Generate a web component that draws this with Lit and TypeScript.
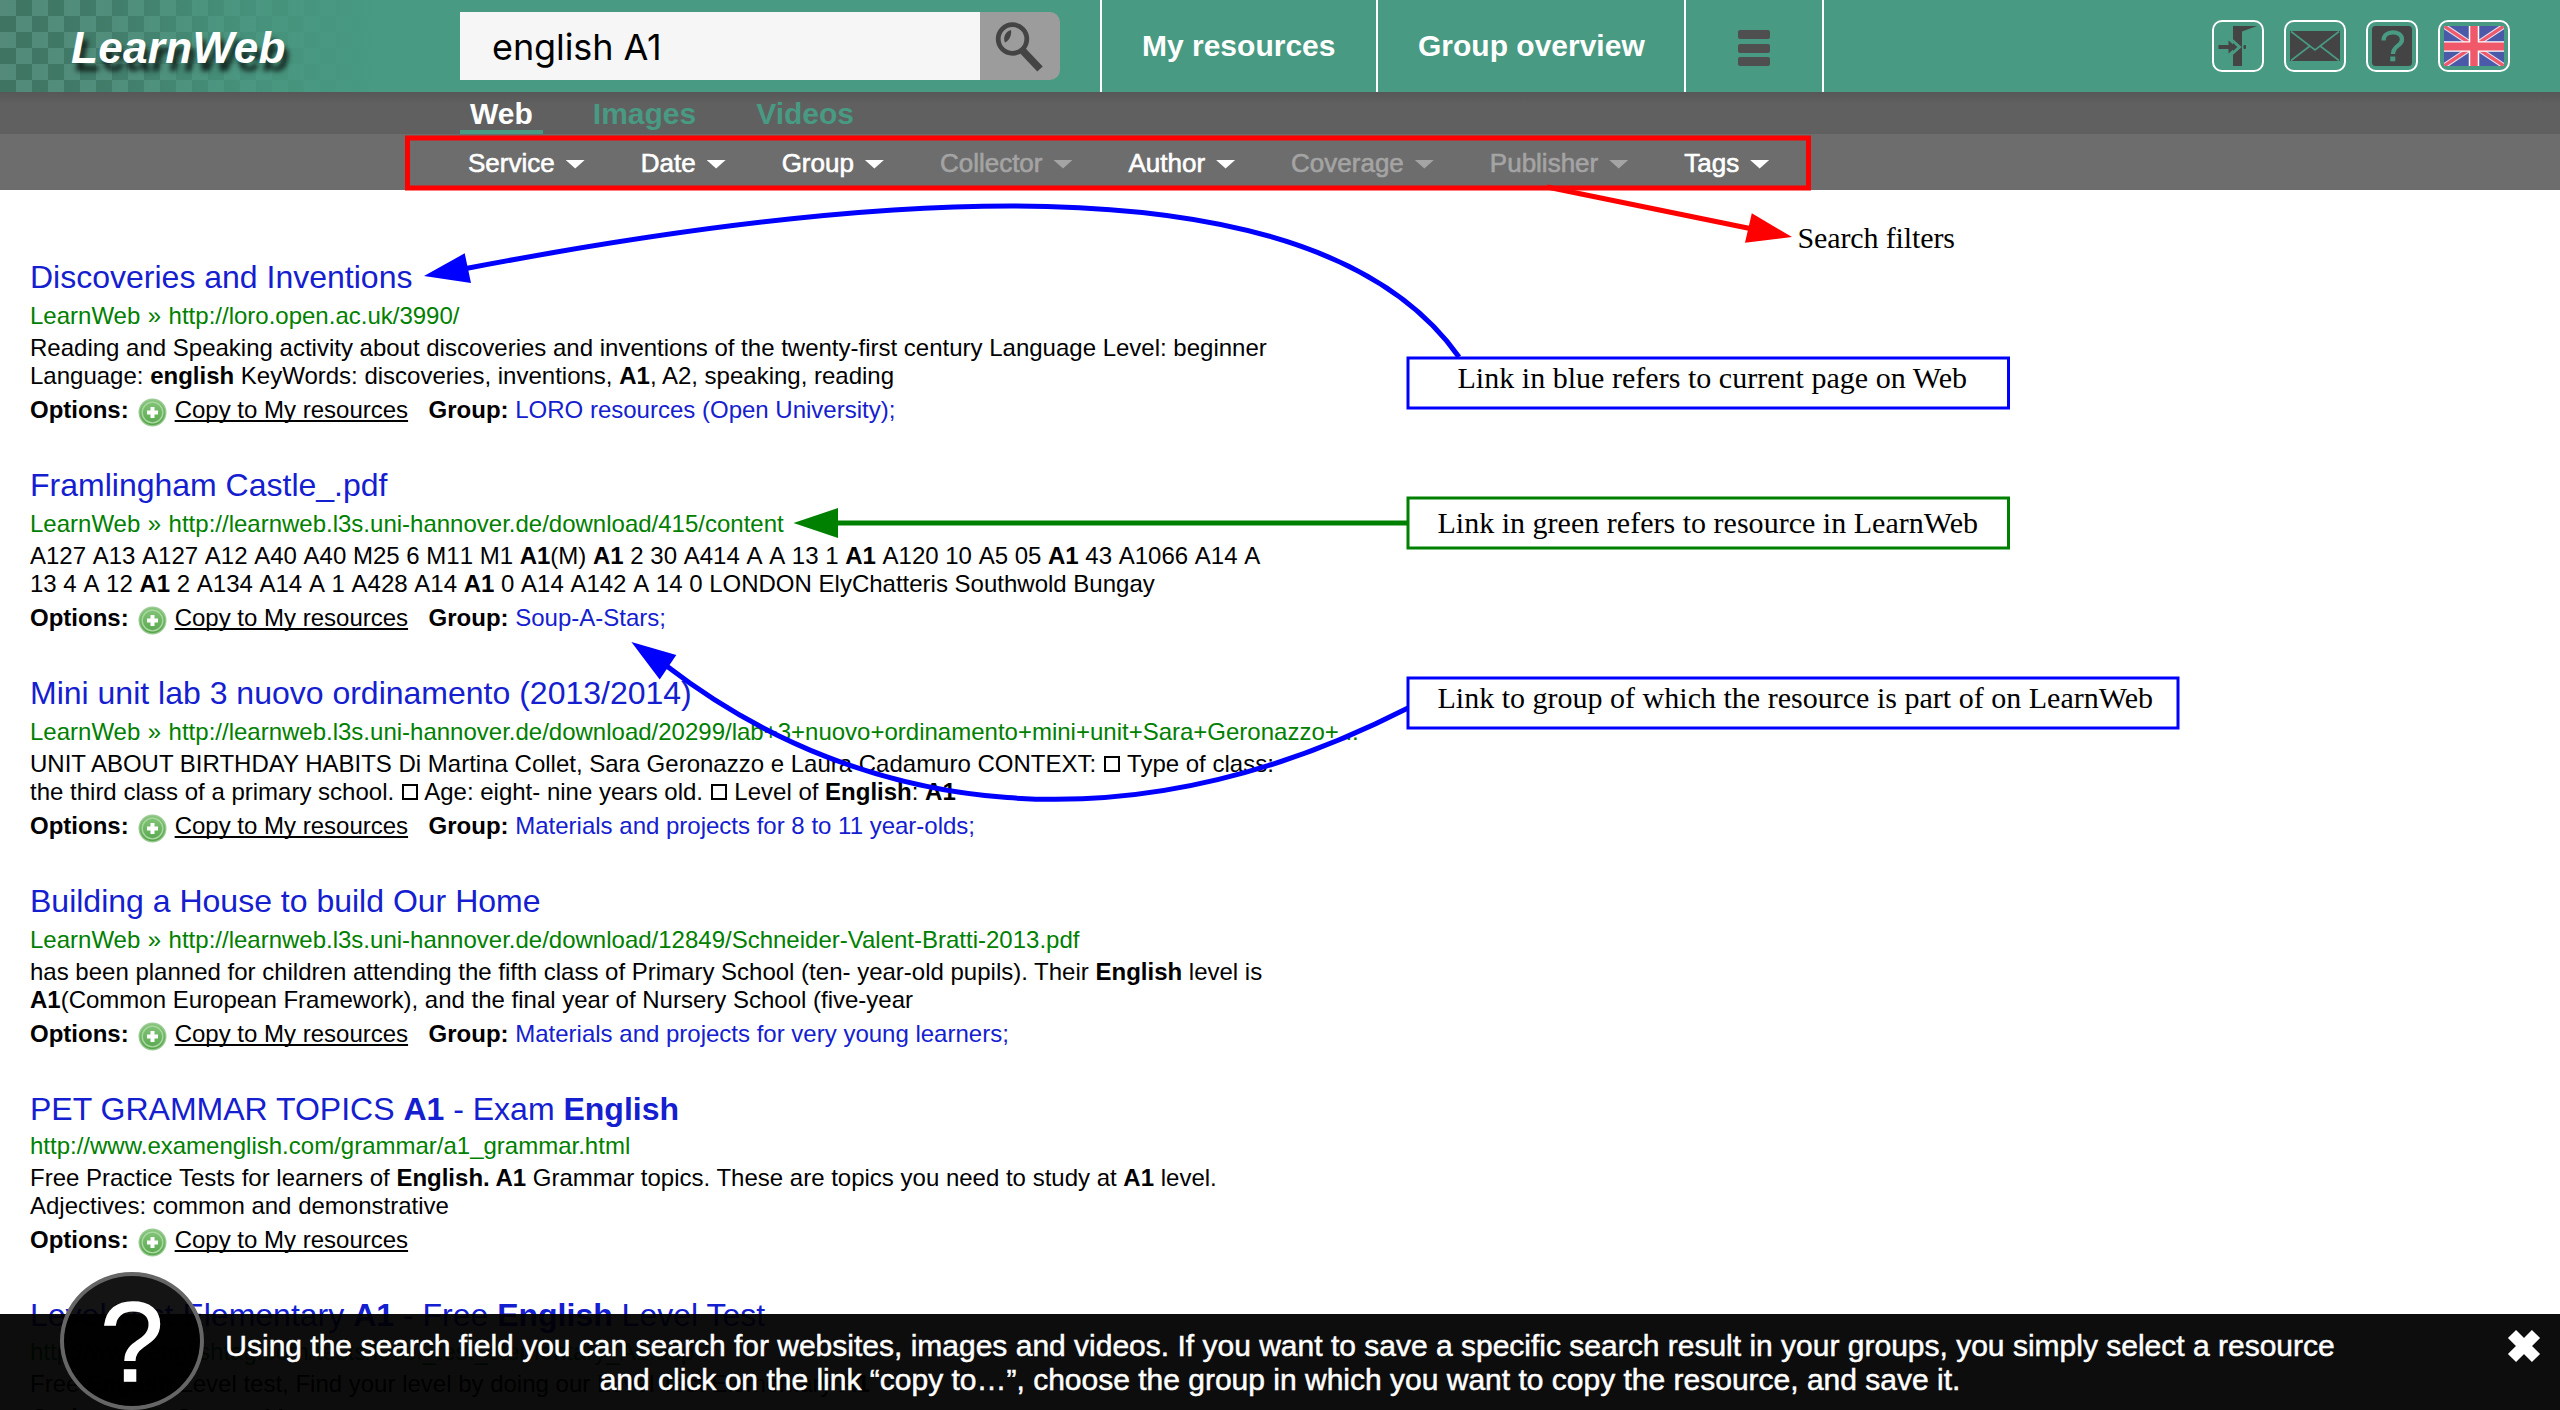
import { LitElement, html, css, svg, nothing, type TemplateResult } from "lit";
import { customElement, property } from "lit/decorators.js";
import { classMap } from "lit/directives/class-map.js";

interface Filter {
  label: string;
  enabled: boolean;
}

interface Result {
  title: TemplateResult;
  source?: string;
  url: string;
  snippet: TemplateResult[];
  codes?: boolean;
  group?: string;
}

const box = html`<span class="tofu"></span>`;

const FILTERS: Filter[] = [
  { label: "Service", enabled: true },
  { label: "Date", enabled: true },
  { label: "Group", enabled: true },
  { label: "Collector", enabled: false },
  { label: "Author", enabled: true },
  { label: "Coverage", enabled: false },
  { label: "Publisher", enabled: false },
  { label: "Tags", enabled: true },
];

const RESULTS: Result[] = [
  {
    title: html`Discoveries and Inventions`,
    source: "LearnWeb",
    url: "http://loro.open.ac.uk/3990/",
    snippet: [
      html`Reading and Speaking activity about discoveries and inventions of the twenty-first century Language Level: beginner`,
      html`Language: <b>english</b> KeyWords: discoveries, inventions, <b>A1</b>, A2, speaking, reading`,
    ],
    group: "LORO resources (Open University);",
  },
  {
    title: html`Framlingham Castle_.pdf`,
    source: "LearnWeb",
    url: "http://learnweb.l3s.uni-hannover.de/download/415/content",
    snippet: [
      html`A127 A13 A127 A12 A40 A40 M25 6 M11 M1 <b>A1</b>(M) <b>A1</b> 2 30 A414 A A 13 1 <b>A1</b> A120 10 A5 05 <b>A1</b> 43 A1066 A14 A`,
      html`13 4 A 12 <b>A1</b> 2 A134 A14 A 1 A428 A14 <b>A1</b> 0 A14 A142 A 14 0 LONDON ElyChatteris Southwold Bungay`,
    ],
    codes: true,
    group: "Soup-A-Stars;",
  },
  {
    title: html`Mini unit lab 3 nuovo ordinamento (2013/2014)`,
    source: "LearnWeb",
    url: "http://learnweb.l3s.uni-hannover.de/download/20299/lab+3+nuovo+ordinamento+mini+unit+Sara+Geronazzo+...",
    snippet: [
      html`UNIT ABOUT BIRTHDAY HABITS Di Martina Collet, Sara Geronazzo e Laura Cadamuro CONTEXT: ${box} Type of class:`,
      html`the third class of a primary school. ${box} Age: eight- nine years old. ${box} Level of <b>English</b>: <b>A1</b>`,
    ],
    group: "Materials and projects for 8 to 11 year-olds;",
  },
  {
    title: html`Building a House to build Our Home`,
    source: "LearnWeb",
    url: "http://learnweb.l3s.uni-hannover.de/download/12849/Schneider-Valent-Bratti-2013.pdf",
    snippet: [
      html`has been planned for children attending the fifth class of Primary School (ten- year-old pupils). Their <b>English</b> level is`,
      html`<b>A1</b>(Common European Framework), and the final year of Nursery School (five-year`,
    ],
    group: "Materials and projects for very young learners;",
  },
  {
    title: html`PET GRAMMAR TOPICS <b>A1</b> - Exam <b>English</b>`,
    url: "http://www.examenglish.com/grammar/a1_grammar.html",
    snippet: [
      html`Free Practice Tests for learners of <b>English. A1</b> Grammar topics. These are topics you need to study at <b>A1</b> level.`,
      html`Adjectives: common and demonstrative`,
    ],
  },
  {
    title: html`Level Test Elementary <b>A1</b> - Free <b>English</b> Level Test`,
    url: "http://www.englishtag.com/tests/level_test_elementary_A1.asp",
    snippet: [html`Free <b>English</b> Level test, Find your level by doing our Level Test Elementary <b>A1</b>`],
  },
];

@customElement("learnweb-header")
export class LearnwebHeader extends LitElement {
  static styles = css`
    :host {
      display: flex;
      height: 92px;
      box-sizing: border-box;
      background: #489a82;
      color: #fff;
      font-family: "Liberation Sans", Arial, sans-serif;
    }
    .brand {
      width: 460px;
      flex: none;
      box-sizing: border-box;
      padding-left: 71px;
      display: flex;
      align-items: center;
      background: linear-gradient(90deg, rgba(72, 154, 130, 0) 0, rgba(72, 154, 130, 0.25) 110px, rgba(72, 154, 130, 0.75) 240px, #489a82 380px),
        repeating-conic-gradient(#3f7362 0 25%, #538a79 0 50%) 0 0 / 32px 32px;
    }
    .logo {
      font: italic bold 44px/48px "Liberation Sans", Arial, sans-serif;
      letter-spacing: 0.35px;
      padding-top: 4px;
      text-shadow: 4px 8px 5px rgba(0, 0, 0, 0.75);
    }
    .search {
      display: flex;
      width: 600px;
      height: 68px;
      margin: 12px 40px 0 0;
      flex: none;
    }
    .field {
      width: 520px;
      box-sizing: border-box;
      background: #f6f6f6;
      color: #000;
      padding-left: 32px;
      font: 36px/70px Inter, sans-serif;
      letter-spacing: -0.1px;
      white-space: nowrap;
    }
    .go {
      width: 80px;
      background: #9c9c9c;
      border-radius: 0 10px 10px 0;
    }
    .nav {
      display: flex;
      font-size: 30px;
      font-weight: bold;
      line-height: 91px;
    }
    .cell {
      box-sizing: border-box;
      border-left: 2px solid #fff;
      padding-left: 40px;
      white-space: nowrap;
    }
    .cell-res {
      width: 276px;
    }
    .cell-group {
      width: 308px;
    }
    .cell-menu {
      width: 140px;
      padding: 0;
      border-right: 2px solid #fff;
      display: flex;
      flex-direction: column;
      align-items: center;
      padding-top: 30px;
      gap: 4.5px;
    }
    .bar {
      width: 32px;
      height: 9px;
      border-radius: 2px;
      background: #4f4f4f;
    }
    .tools {
      display: flex;
      gap: 20px;
      margin: 20px 50px 0 auto;
    }
    .tool {
      height: 48px;
      border: 2px solid #fff;
      border-radius: 10px;
    }
    svg {
      display: block;
    }
  `;

  render() {
    return html`
      <div class="brand"><span class="logo">LearnWeb</span></div>
      <div class="search">
        <div class="field">english A1</div>
        <div class="go">
          <svg width="80" height="68" viewBox="0 0 80 68">
            <circle cx="32.5" cy="27" r="14.3" fill="none" stroke="#444" stroke-width="4.8" />
            <path d="M42.5 38.5 L60 57" stroke="#444" stroke-width="7.5" fill="none" />
            <path d="M31 18 C25.500 19 22.500 26 25 30.500 C29 29 32 23 31 18 Z" fill="#444" />
          </svg>
        </div>
      </div>
      <div class="nav">
        <div class="cell cell-res">My resources</div>
        <div class="cell cell-group">Group overview</div>
        <div class="cell cell-menu"><div class="bar"></div><div class="bar"></div><div class="bar"></div></div>
      </div>
      <div class="tools">
        <div class="tool">
          <svg width="48" height="48" viewBox="0 0 48 48" fill="#444">
            <path d="M19 4 H43 L28 9.500 V44 H19 Z" />
            <path d="M15 15.500 L25.500 25 L15 34.500" fill="none" stroke="#489a82" stroke-width="3" />
            <path d="M4.500 23 H14.500 V18.500 L22 25 L14.500 31.500 V27 H4.500 Z" />
            <rect x="29.500" y="23" width="2.500" height="4" rx="1" />
          </svg>
        </div>
        <div class="tool">
          <svg width="58" height="48" viewBox="0 0 58 48">
            <rect x="4" y="9" width="50" height="30" fill="#444" />
            <path d="M5 9.500 L29 28 L53 9.500 M5 38.500 L24.500 23.500 M53 38.500 L33.500 23.500" fill="none" stroke="#489a82" stroke-width="1.600" />
          </svg>
        </div>
        <div class="tool">
          <svg width="48" height="48" viewBox="0 0 48 48">
            <rect x="4" y="4" width="40" height="40" rx="3.500" fill="#444" />
            <path d="M15.500 18.500 C15.500 7.500 34 8 34 17.500 C34 24 25 23.500 25 32" fill="none" stroke="#489a82" stroke-width="4.300" />
            <rect x="22.300" y="34.500" width="5" height="4.800" fill="#489a82" />
          </svg>
        </div>
        <div class="tool">
          <svg width="68" height="48" viewBox="0 0 68 48">
            <clipPath id="flag"><rect x="4" y="4" width="60" height="40" rx="1.500" /></clipPath>
            <g clip-path="url(#flag)">
              <rect x="4" y="4" width="60" height="40" fill="#4a5aa8" />
              <path d="M4 4 L64 44 M64 4 L4 44" stroke="#e3dcef" stroke-width="5.500" />
              <path d="M4 4 L64 44 M64 4 L4 44" stroke="#f0596a" stroke-width="3.200" />
              <path d="M34 4 V44 M4 24.500 H64" stroke="#fff" stroke-width="10.500" />
              <path d="M34 4 V44" stroke="#f0596a" stroke-width="7.500" />
              <path d="M4 24.500 H64" stroke="#f0596a" stroke-width="8" />
            </g>
          </svg>
        </div>
      </div>
    `;
  }
}

@customElement("search-filters")
export class SearchFilters extends LitElement {
  static styles = css`
    :host {
      display: block;
      font-family: "Liberation Sans", Arial, sans-serif;
    }
    .tabs {
      display: flex;
      gap: 40px;
      height: 42px;
      padding-left: 460px;
      background: linear-gradient(#575757, #606060 12px);
      font-size: 30px;
      font-weight: bold;
      line-height: 44px;
    }
    .tab {
      box-sizing: border-box;
      height: 42px;
      padding: 0 10px;
      color: #489a82;
    }
    .current {
      color: #fff;
      border-bottom: 4px solid #489a82;
    }
    .filters {
      display: flex;
      gap: 56px;
      height: 56px;
      padding-left: 468px;
      background: #6d6d6d;
      font-size: 26px;
      line-height: 58px;
    }
    .filter {
      display: flex;
      gap: 11px;
      color: #fff;
      -webkit-text-stroke: 0.6px currentColor;
    }
    .off {
      color: #a4a4a4;
    }
    .arrow {
      margin-top: 26px;
      width: 19px;
      height: 8.500px;
      background: currentColor;
      clip-path: polygon(0 0, 100% 0, 50% 100%);
    }
  `;

  render() {
    return html`
      <div class="tabs">
        <div class="tab current">Web</div>
        <div class="tab">Images</div>
        <div class="tab">Videos</div>
      </div>
      <div class="filters">
        ${FILTERS.map(
          (f) => html`<div class=${classMap({ filter: true, off: !f.enabled })}>${f.label}<span class="arrow"></span></div>`
        )}
      </div>
    `;
  }
}

@customElement("search-result")
export class SearchResult extends LitElement {
  @property({ attribute: false }) result!: Result;

  static styles = css`
    :host {
      display: block;
      font: 24px/28px "Liberation Sans", Arial, sans-serif;
      color: #000;
      white-space: nowrap;
    }
    .title {
      font-size: 32px;
      line-height: 36px;
      color: #1420d0;
    }
    .url {
      margin-top: 7px;
      color: #008000;
      word-spacing: 0.8px;
    }
    .external {
      margin-top: 5px;
    }
    .snippet {
      margin-top: 4px;
    }
    .codes {
      font-kerning: none;
    }
    .options {
      display: flex;
      margin-top: 6px;
      height: 28px;
    }
    .plus {
      margin: 2px 8px 0 9px;
      width: 29px;
      height: 29px;
    }
    .copy {
      text-decoration: underline;
      text-decoration-thickness: 2px;
      text-underline-offset: 2px;
      text-decoration-skip-ink: none;
    }
    .group {
      margin-left: 20.500px;
    }
    .group-link {
      color: #1420d0;
      margin-left: 6.700px;
    }
    .tofu {
      display: inline-block;
      box-sizing: border-box;
      width: 16px;
      height: 16px;
      border: 2px solid currentColor;
      margin: 0 1px;
    }
  `;

  render() {
    const r = this.result;
    return html`
      <div class="title">${r.title}</div>
      <div class=${classMap({ url: true, external: !r.source })}>${r.source ? `${r.source} » ` : nothing}${r.url}</div>
      <div class=${classMap({ snippet: true, codes: !!r.codes })}>${r.snippet.map((line) => html`<div>${line}</div>`)}</div>
      <div class="options">
        <b>Options:</b>
        <svg class="plus" viewBox="0 0 29 29">
          <defs>
            <linearGradient id="g" x1="0" y1="0" x2="0" y2="1">
              <stop offset="0" stop-color="#86c67c" />
              <stop offset="1" stop-color="#57a64c" />
            </linearGradient>
          </defs>
          <circle cx="14.500" cy="14.500" r="14" fill="#9fcb97" />
          <circle cx="14.500" cy="14.500" r="12.800" fill="url(#g)" />
          <circle cx="14.500" cy="14.500" r="10.300" fill="none" stroke="#a9d9a0" stroke-width="1.300" />
          <path d="M14.500 9 V20 M9 14.500 H20" stroke="#fff" stroke-width="4" />
        </svg>
        <span class="copy">Copy to My resources</span>
        ${r.group ? html`<b class="group">Group:</b><span class="group-link">${r.group}</span>` : nothing}
      </div>
    `;
  }
}

@customElement("callout-layer")
export class CalloutLayer extends LitElement {
  static styles = css`
    :host {
      display: block;
    }
    svg {
      display: block;
    }
    .note {
      font: 30px "Liberation Serif", "Times New Roman", serif;
      fill: #000;
    }
    .line {
      fill: none;
      stroke-width: 5;
    }
    .frame {
      fill: #fff;
      stroke-width: 3;
    }
    .red {
      stroke: #f00;
    }
    .blue {
      stroke: #00f;
    }
    .green {
      stroke: #008000;
    }
    .head-red {
      fill: #f00;
    }
    .head-blue {
      fill: #00f;
    }
    .head-green {
      fill: #008000;
    }
  `;

  private note(x: number, y: number, length: number, text: string) {
    return svg`<text class="note" x=${x} y=${y} textLength=${length}>${text}</text>`;
  }

  render() {
    return html`
      <svg width="2560" height="1410" viewBox="0 0 2560 1410">
        <rect class="line red" x="407.500" y="138" width="1401" height="50" />
        <path class="line red" d="M1547 187 L1750 228.500" />
        <path class="head-red" d="M1792 237 L1751.800 213.300 L1745 242.700 Z" />
        ${this.note(1797.5, 248, 157.5, "Search filters")}

        <path class="line blue" d="M466 268.500 C840 197 1310 145 1459 357" />
        <path class="head-blue" d="M424 276 L464.700 253.300 L471 283 Z" />
        <rect class="frame blue" x="1408" y="358" width="600.500" height="50" />
        ${this.note(1457.5, 388, 509.5, "Link in blue refers to current page on Web")}

        <path class="line green" d="M836 523 H1408" />
        <path class="head-green" d="M793.500 523 L838 508 V538 Z" />
        <rect class="frame green" x="1408" y="498" width="600.500" height="50" />
        ${this.note(1437.5, 533, 540.5, "Link in green refers to resource in LearnWeb")}

        <path class="line blue" d="M666 665.500 C865 819 1130 850 1408 708" />
        <path class="head-blue" d="M631.400 642 L676.300 655 L659.700 679.500 Z" />
        <rect class="frame blue" x="1408" y="678" width="770" height="50" />
        ${this.note(1437.5, 708, 715.5, "Link to group of which the resource is part of on LearnWeb")}
      </svg>
    `;
  }
}

@customElement("help-bar")
export class HelpBar extends LitElement {
  static styles = css`
    :host {
      display: block;
      position: relative;
      height: 96px;
      background: rgba(0, 0, 0, 0.95);
      color: #fff;
      font: 30px/34px "Liberation Sans", Arial, sans-serif;
    }
    .text {
      padding-top: 15px;
      text-align: center;
      white-space: nowrap;
      -webkit-text-stroke: 0.5px #fff;
    }
    .badge {
      position: absolute;
      left: 60px;
      top: -42px;
      width: 144px;
      height: 138px;
      box-sizing: border-box;
      border: 4px solid #666;
      border-radius: 50%;
      background: rgba(0, 0, 0, 0.92);
      text-align: center;
      font-size: 114px;
      line-height: 132px;
      -webkit-text-stroke: 1.500px #fff;
    }
    .close {
      position: absolute;
      left: 2507px;
      top: 15px;
    }
  `;

  render() {
    return html`
      <div class="badge">?</div>
      <div class="text">
        <div>Using the search field you can search for websites, images and videos. If you want to save a specific search result in your groups, you simply select a resource</div>
        <div>and click on the link “copy to…”, choose the group in which you want to copy the resource, and save it.</div>
      </div>
      <svg class="close" width="34" height="34" viewBox="0 0 34 34">
        <path d="M5 5 L29 29 M29 5 L5 29" stroke="#fff" stroke-width="11.500" />
      </svg>
    `;
  }
}

@customElement("app-root")
export class AppRoot extends LitElement {
  static styles = css`
    :host {
      display: block;
      position: relative;
      width: 2560px;
      height: 1410px;
      overflow: hidden;
      background: #fff;
    }
    .results {
      display: flex;
      flex-direction: column;
      gap: 43px;
      padding: 69px 0 0 30px;
    }
    .callouts {
      position: absolute;
      left: 0;
      top: 0;
    }
    .help {
      position: absolute;
      left: 0;
      right: 0;
      bottom: 0;
    }
  `;

  render() {
    return html`
      <learnweb-header></learnweb-header>
      <search-filters></search-filters>
      <div class="results">${RESULTS.map((r) => html`<search-result .result=${r}></search-result>`)}</div>
      <callout-layer class="callouts"></callout-layer>
      <help-bar class="help"></help-bar>
    `;
  }
}
